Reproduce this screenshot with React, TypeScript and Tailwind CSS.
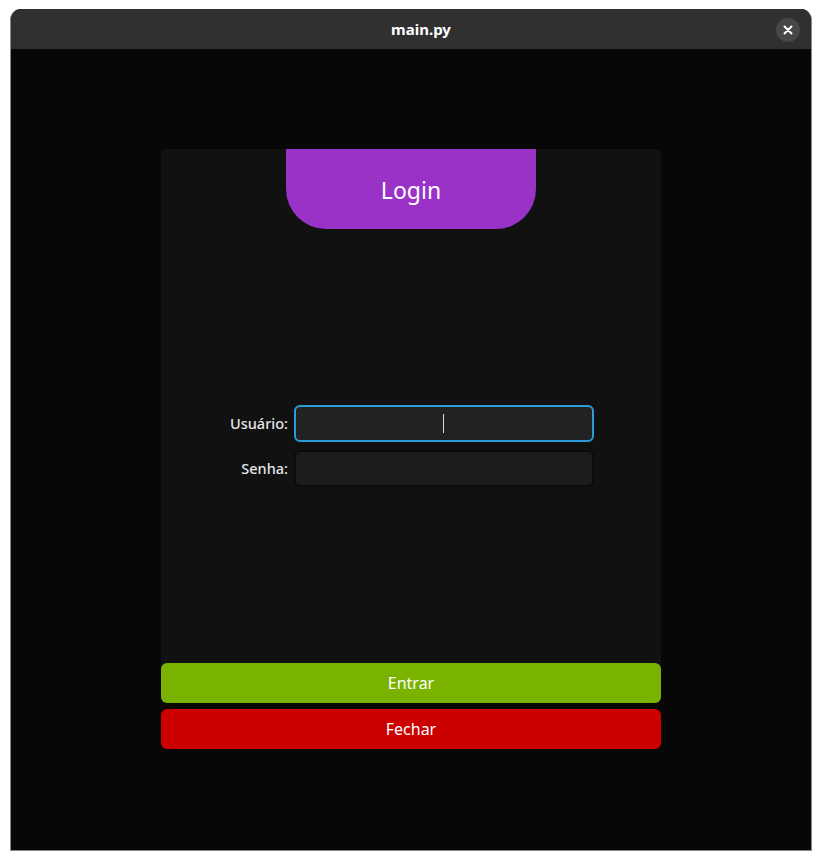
export default function App() {
  return (
    <div className="w-[822px] h-[860px] bg-white pt-[9px] px-[10px]" style={{ fontFamily: '"Noto Sans", "Open Sans", sans-serif' }}>
      <div className="flex flex-col h-[842px] rounded-t-[11px] overflow-hidden border-x border-b border-[#8a8a8a] bg-[#070707]">
        <div className="relative flex items-center justify-center h-[40px] bg-[#303030] shrink-0">
          <span className="ml-[20px] text-[15px] font-bold text-white">main.py</span>
          <button className="absolute right-[11px] top-[9px] flex items-center justify-center w-[24px] h-[24px] rounded-full bg-[#474747]">
            <svg width="10" height="10" viewBox="0 0 10 10">
              <path d="M1.5 1.5 L8.5 8.5 M8.5 1.5 L1.5 8.5" stroke="white" strokeWidth="2" strokeLinecap="round" />
            </svg>
          </button>
        </div>

        <div className="flex flex-col items-center pt-[100px]">
          <div className="flex flex-col w-[500px] h-[554px] bg-[#111111] rounded-[6px]">
            <div className="flex justify-center">
              <div className="flex items-center justify-center w-[250px] h-[80px] bg-[#9b32c8] rounded-b-[40px]">
                <span className="text-[23px] text-white pt-[3px]">Login</span>
              </div>
            </div>

            <div className="flex flex-1 flex-col items-center justify-center gap-[8px]">
              <div className="flex items-center gap-[6px] pl-[44px] w-full">
                <label className="w-[83px] text-right text-[14.5px] font-medium text-[#e6e6e6]">Usuário:</label>
                <div className="relative w-[300px] h-[37px] rounded-[6px] border-2 border-[#2d9bd8] bg-[#222222]">
                  <span className="absolute left-[147px] top-[7px] w-[1px] h-[19px] bg-[#dddddd]" />
                </div>
              </div>
              <div className="flex items-center gap-[6px] pl-[44px] w-full">
                <label className="w-[83px] text-right text-[14.5px] font-medium text-[#e6e6e6]">Senha:</label>
                <div className="w-[300px] h-[37px] rounded-[6px] border-2 border-[#0b0b0b] bg-[#1c1c1c]" />
              </div>
            </div>

            <button className="h-[40px] w-full rounded-[6px] bg-[#79b300] text-[16px] text-white">Entrar</button>
          </div>
          <button className="mt-[6px] h-[40px] w-[500px] rounded-[6px] bg-[#cc0000] text-[16px] text-white">Fechar</button>
        </div>
      </div>
    </div>
  );
}
